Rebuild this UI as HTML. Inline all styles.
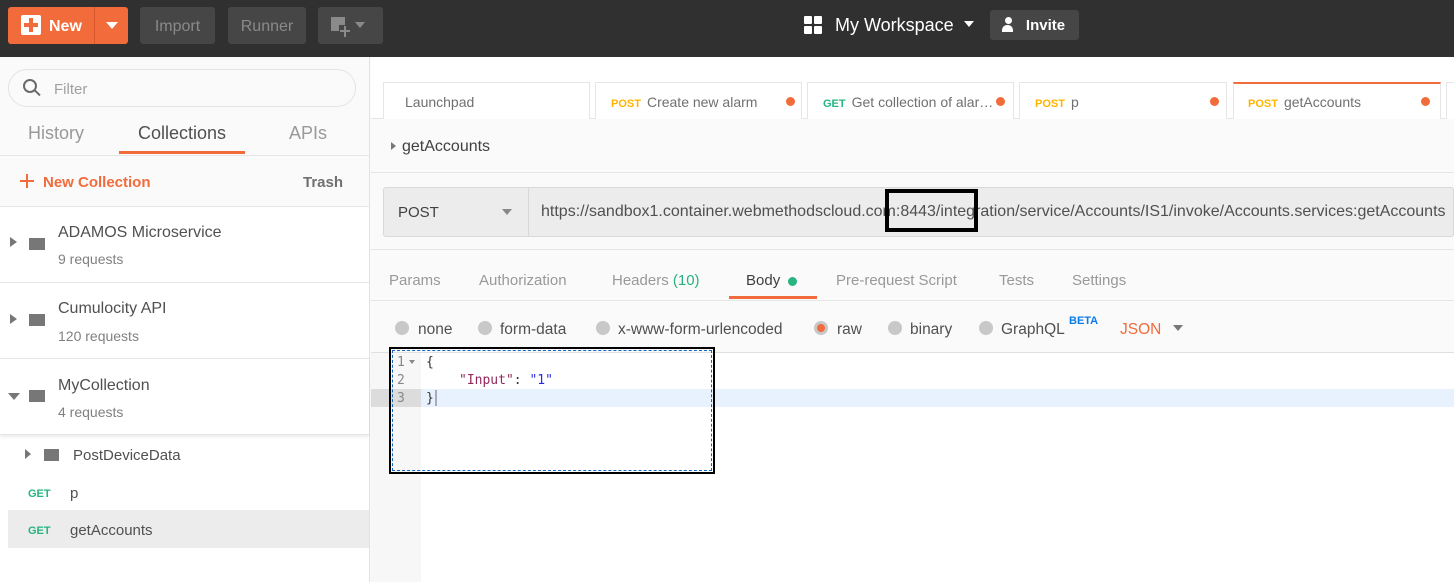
<!DOCTYPE html>
<html><head><meta charset="utf-8"><style>
*{box-sizing:border-box;margin:0;padding:0}
body{width:1454px;height:582px;overflow:hidden;font-family:"Liberation Sans",sans-serif;background:#fafafa;position:relative;color:#505050}
.a{position:absolute}
.top{left:0;top:0;width:1454px;height:57px;background:#303030}
.btn{position:absolute;top:7px;height:37px;border-radius:3px;background:#464646;color:#8a8a8a;font-size:16px;line-height:37px;text-align:center}
.sb{left:0;top:57px;width:370px;height:525px;background:#fff;border-right:1px solid #e2e2e2}
.row{position:absolute;left:0;width:369px;border-bottom:1px solid #e6e6e6}
.t{position:absolute;white-space:nowrap}
.tab{position:absolute;top:82px;height:37px;background:#fff;border:1px solid #e6e6e6;border-bottom:none;font-size:14px;line-height:39px;color:#707070}
.dot{position:absolute;width:9px;height:9px;border-radius:50%;background:#f26b3a;top:14px}
.post{color:#ffb400;font-size:11px;font-weight:bold;margin-right:6px}
.get{color:#26b47f;font-size:11px;font-weight:bold;margin-right:6px}
.rad{position:absolute;top:321px;width:14px;height:14px;border-radius:50%;background:#c8c8c8}
.mono{font-family:"DejaVu Sans Mono","Liberation Mono",monospace;font-size:13px}
</style></head><body>
<div class="a top"></div>
<div class="btn" style="left:8px;width:120px;background:#f26b3a;color:#fff;font-weight:bold;text-align:left">
 <span class="a" style="left:13px;top:8px;width:20px;height:20px;background:#fff;border-radius:2px"></span>
 <span class="a" style="left:21px;top:11px;width:4px;height:14px;background:#f26b3a"></span>
 <span class="a" style="left:16px;top:16px;width:14px;height:4px;background:#f26b3a"></span>
 <span class="a" style="left:41px;top:1px">New</span>
 <span class="a" style="left:86px;top:0;width:1px;height:37px;background:#d85a2c"></span>
 <span class="a" style="left:98px;top:15px;border:6px solid transparent;border-top:7px solid #fff"></span>
</div>
<div class="btn" style="left:140px;width:75px;line-height:39px">Import</div>
<div class="btn" style="left:228px;width:78px;line-height:39px">Runner</div>
<div class="btn" style="left:318px;width:65px">
 <span class="a" style="left:13px;top:10px;width:14px;height:14px;background:#8a8a8a"></span>
 <span class="a" style="left:21px;top:18px;width:12px;height:12px;background:#464646"></span>
 <span class="a" style="left:26px;top:19px;width:2px;height:11px;background:#8a8a8a"></span>
 <span class="a" style="left:22px;top:23px;width:10px;height:2px;background:#8a8a8a"></span>
 <span class="a" style="left:37px;top:15px;border:5px solid transparent;border-top:6px solid #8a8a8a"></span>
</div>
<div class="a" style="left:804px;top:16px;width:8px;height:8px;background:#fff;border-radius:1px"></div>
<div class="a" style="left:814px;top:16px;width:8px;height:8px;background:#fff;border-radius:1px"></div>
<div class="a" style="left:804px;top:26px;width:8px;height:8px;background:#fff;border-radius:1px"></div>
<div class="a" style="left:814px;top:26px;width:8px;height:8px;background:#fff;border-radius:1px"></div>
<div class="t" style="left:835px;top:15px;color:#fff;font-size:18px">My Workspace</div>
<div class="a" style="left:964px;top:21px;border:5px solid transparent;border-top:6px solid #fff"></div>
<div class="btn" style="left:990px;top:10px;width:89px;height:30px;line-height:31px;color:#fff;font-weight:bold;font-size:15px;background:#464646"><span style="margin-left:22px">Invite</span>
 <span class="a" style="left:15px;top:7px;width:7px;height:7px;border-radius:50%;background:#fff"></span>
 <span class="a" style="left:12px;top:15px;width:11px;height:7px;border-radius:5px 5px 0 0;background:#fff"></span>
</div>

<div class="a sb"></div>
<div class="a" style="left:0;top:57px;width:369px;height:150px;background:#fafafa;border-bottom:1px solid #e6e6e6"></div>
<div class="a" style="left:8px;top:69px;width:348px;height:38px;border:1px solid #e4e4e4;border-radius:19px;background:#fafafa"></div>
<div class="a" style="left:23px;top:79px;width:14px;height:14px;border:2px solid #6a6a6a;border-radius:50%"></div>
<div class="a" style="left:34px;top:92px;width:7px;height:2px;background:#6a6a6a;transform:rotate(45deg)"></div>
<div class="t" style="left:54px;top:81px;font-size:15px;color:#a0a0a0">Filter</div>
<div class="t" style="left:28px;top:123px;font-size:18px;color:#999">History</div>
<div class="t" style="left:138px;top:123px;font-size:18px;color:#505050">Collections</div>
<div class="t" style="left:289px;top:123px;font-size:18px;color:#999">APIs</div>
<div class="a" style="left:119px;top:151px;width:126px;height:3px;background:#f26b3a"></div>
<div class="a" style="left:0;top:155px;width:369px;height:1px;background:#e6e6e6"></div>
<div class="a" style="left:20px;top:180px;width:14px;height:2px;background:#f26b3a"></div>
<div class="a" style="left:26px;top:174px;width:2px;height:14px;background:#f26b3a"></div>
<div class="t" style="left:43px;top:174px;font-size:15px;color:#f26b3a;font-weight:bold">New Collection</div>
<div class="t" style="left:303px;top:174px;font-size:15px;color:#707070;font-weight:bold">Trash</div>

<div class="row" style="top:207px;height:76px"></div>
<div class="row" style="top:283px;height:76px"></div>
<div class="row" style="top:359px;height:76px;box-shadow:0 2px 3px rgba(0,0,0,.08)"></div>
<div class="a" style="left:10px;top:237px;border:5px solid transparent;border-left:7px solid #777"></div>
<div class="a" style="left:10px;top:314px;border:5px solid transparent;border-left:7px solid #777"></div>
<div class="a" style="left:8px;top:393px;border:6px solid transparent;border-top:7px solid #777"></div>
<div class="a" style="left:29px;top:238px;width:16px;height:12px;background:#777"></div>
<div class="a" style="left:29px;top:314px;width:16px;height:12px;background:#777"></div>
<div class="a" style="left:29px;top:390px;width:16px;height:12px;background:#777"></div>
<div class="t" style="left:58px;top:224px;font-size:16px">ADAMOS Microservice</div>
<div class="t" style="left:58px;top:251px;font-size:14px;color:#808080">9 requests</div>
<div class="t" style="left:58px;top:300px;font-size:16px">Cumulocity API</div>
<div class="t" style="left:58px;top:328px;font-size:14px;color:#808080">120 requests</div>
<div class="t" style="left:58px;top:377px;font-size:16px">MyCollection</div>
<div class="t" style="left:58px;top:404px;font-size:14px;color:#808080">4 requests</div>
<div class="a" style="left:25px;top:449px;border:5px solid transparent;border-left:6px solid #777"></div>
<div class="a" style="left:44px;top:449px;width:15px;height:12px;background:#777"></div>
<div class="t" style="left:73px;top:447px;font-size:15px">PostDeviceData</div>
<div class="t get" style="left:28px;top:488px">GET</div>
<div class="t" style="left:70px;top:485px;font-size:15px">p</div>
<div class="a" style="left:8px;top:510px;width:361px;height:38px;background:#ececec"></div>
<div class="t get" style="left:28px;top:525px">GET</div>
<div class="t" style="left:70px;top:522px;font-size:15px">getAccounts</div>

<div class="a" style="left:371px;top:57px;width:1083px;height:62px;background:#fff"></div>
<div class="a" style="left:371px;top:118px;width:1083px;height:1px;background:#e6e6e6"></div>
<div class="tab" style="left:383px;width:207px;padding-left:21px">Launchpad</div>
<div class="tab" style="left:595px;width:207px;padding-left:15px"><span class="post">POST</span>Create new alarm<span class="dot" style="left:190px"></span></div>
<div class="tab" style="left:807px;width:207px;padding-left:15px"><span class="get">GET</span>Get collection of alar…<span class="dot" style="left:188px"></span></div>
<div class="tab" style="left:1019px;width:208px;padding-left:15px"><span class="post">POST</span>p<span class="dot" style="left:190px"></span></div>
<div class="tab" style="left:1233px;width:208px;padding-left:14px;border-top:2px solid #f26b3a;line-height:37px"><span class="post">POST</span>getAccounts<span class="dot" style="left:187px;top:13px"></span></div>
<div class="tab" style="left:1446px;width:20px"></div>

<div class="a" style="left:391px;top:142px;border:4px solid transparent;border-left:5px solid #777"></div>
<div class="t" style="left:402px;top:138px;font-size:16px;color:#404040">getAccounts</div>
<div class="a" style="left:371px;top:172px;width:1083px;height:1px;background:#e6e6e6"></div>
<div class="a" style="left:383px;top:187px;width:1071px;height:50px;background:#ececec;border:1px solid #d8d8d8;border-radius:3px"></div>
<div class="a" style="left:528px;top:188px;width:1px;height:48px;background:#d8d8d8"></div>
<div class="t" style="left:398px;top:204px;font-size:15px;color:#404040">POST</div>
<div class="a" style="left:502px;top:209px;border:5px solid transparent;border-top:6px solid #888"></div>
<div class="t" style="left:541px;top:203px;font-size:16px;color:#505050;letter-spacing:0">https://sandbox1.container.webmethodscloud.com:8443/integration/service/Accounts/IS1/invoke/Accounts.services:getAccounts</div>
<div class="a" style="left:885px;top:189px;width:93px;height:43px;border:4px solid #000"></div>
<div class="a" style="left:371px;top:249px;width:1083px;height:1px;background:#e6e6e6"></div>

<div class="t" style="left:389px;top:272px;font-size:15px;color:#999">Params</div>
<div class="t" style="left:479px;top:272px;font-size:15px;color:#999">Authorization</div>
<div class="t" style="left:612px;top:272px;font-size:15px;color:#999">Headers <span style="color:#26b47f">(10)</span></div>
<div class="t" style="left:746px;top:272px;font-size:15px;color:#404040">Body</div>
<div class="a" style="left:788px;top:277px;width:9px;height:9px;border-radius:50%;background:#26b47f"></div>
<div class="a" style="left:729px;top:296px;width:88px;height:3px;background:#f26b3a"></div>
<div class="t" style="left:836px;top:272px;font-size:15px;color:#999">Pre-request Script</div>
<div class="t" style="left:999px;top:272px;font-size:15px;color:#999">Tests</div>
<div class="t" style="left:1072px;top:272px;font-size:15px;color:#999">Settings</div>
<div class="a" style="left:371px;top:300px;width:1083px;height:1px;background:#e6e6e6"></div>

<div class="rad" style="left:395px"></div><div class="t" style="left:418px;top:321px;font-size:15.5px">none</div>
<div class="rad" style="left:478px"></div><div class="t" style="left:500px;top:321px;font-size:15.5px">form-data</div>
<div class="rad" style="left:596px"></div><div class="t" style="left:618px;top:321px;font-size:15.5px">x-www-form-urlencoded</div>
<div class="rad" style="left:814px;background:#f26b3a;border:3px solid #c8c8c8"></div><div class="t" style="left:837px;top:321px;font-size:15.5px">raw</div>
<div class="rad" style="left:888px"></div><div class="t" style="left:910px;top:321px;font-size:15.5px">binary</div>
<div class="rad" style="left:979px"></div><div class="t" style="left:1001px;top:321px;font-size:15.5px">GraphQL</div>
<div class="t" style="left:1069px;top:315px;font-size:11px;color:#097bed;font-weight:bold">BETA</div>
<div class="t" style="left:1120px;top:321px;font-size:15.5px;color:#f26b3a">JSON</div>
<div class="a" style="left:1173px;top:325px;border:5px solid transparent;border-top:6px solid #777"></div>

<div class="a" style="left:371px;top:352px;width:1083px;height:230px;background:#fff;border-top:1px solid #e0e0e0"></div>
<div class="a" style="left:371px;top:353px;width:50px;height:229px;background:#f7f7f7"></div>
<div class="a" style="left:421px;top:389px;width:1033px;height:18px;background:#e8f2fe"></div>
<div class="a" style="left:371px;top:389px;width:50px;height:18px;background:#dcdcdc"></div>
<div class="t mono" style="left:397px;top:355px;color:#888">1</div>
<div class="a" style="left:409px;top:360px;border:3px solid transparent;border-top:4px solid #888"></div>
<div class="t mono" style="left:397px;top:373px;color:#888">2</div>
<div class="t mono" style="left:397px;top:391px;color:#888">3</div>
<div class="t mono" style="left:426px;top:355px;color:#333">{</div>
<div class="t mono" style="left:459px;top:373px"><span style="color:#92275c">"Input"</span><span style="color:#333">: </span><span style="color:#2a2ae8">"1"</span></div>
<div class="t mono" style="left:426px;top:391px;color:#333">}</div>
<div class="a" style="left:435px;top:390px;width:2px;height:16px;background:#aab"></div>
<div class="a" style="left:389px;top:347px;width:326px;height:127px;border:2px solid #000"></div>
<div class="a" style="left:392px;top:350px;width:320px;height:121px;border:1px dashed #1565c0"></div>
</body></html>
